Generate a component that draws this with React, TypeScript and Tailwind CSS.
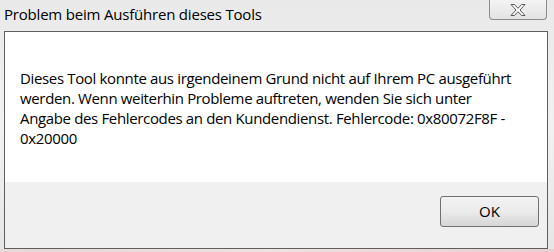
export default function App() {
  return (
    <div
      className="w-[554px] h-[252px] overflow-hidden flex flex-col bg-gradient-to-b from-[#e9e9e9] via-[#f1f1f1] to-[#e6e6e6]"
      style={{ fontFamily: '"Open Sans", "Noto Sans", sans-serif' }}
    >
      {/* Title bar */}
      <div className="h-[31px] flex items-start justify-between shrink-0">
        <div className="pl-[4px] pt-[4px] text-[15px] leading-[20px] text-black tracking-[-0.2px]">
          Problem beim Ausführen dieses Tools
        </div>
        <button className="mr-[7px] w-[58px] h-[20px] border border-t-0 border-[#8c8c8c] rounded-b-[4px] bg-gradient-to-b from-[#f4f4f4] to-[#e3e3e3] flex items-center justify-center">
          <svg width="18" height="14" viewBox="0 0 18 14">
            <path
              d="M2 1.5h3.5L9 5.3l3.5-3.8H16L11 7l5 5.5h-3.5L9 8.7l-3.5 3.8H2L7 7z"
              fill="#ffffff"
              stroke="#5a5a5a"
              strokeWidth="1"
              strokeLinejoin="round"
            />
          </svg>
        </button>
      </div>

      {/* Client area */}
      <div className="ml-[4px] mr-[6px] h-[218px] border border-[#5e5e5e] flex flex-col shrink-0">
        <div className="bg-white h-[150px] pl-[15px] pt-[36px]">
          <p className="w-[500px] text-[15px] leading-[20px] text-black tracking-[-0.35px]">
            Dieses Tool konnte aus irgendeinem Grund nicht auf Ihrem PC ausgeführt werden. Wenn
            weiterhin Probleme auftreten, wenden Sie sich unter Angabe des Fehlercodes an den
            Kundendienst. Fehlercode: 0x80072F8F - 0x20000
          </p>
        </div>
        <div className="flex-1 bg-[#f0f0f0] flex justify-end items-start pt-[14px] pr-[8px]">
          <button className="w-[99px] h-[31px] rounded-[3px] border border-[#707070] bg-gradient-to-b from-[#f2f2f2] via-[#ebebeb] to-[#d6d6d6] text-[15px] text-black">
            OK
          </button>
        </div>
      </div>
      <div className="flex-1 bg-gradient-to-r from-[#e8d8d8] via-[#efe2e0] to-[#e9cfcf]" />
    </div>
  );
}
